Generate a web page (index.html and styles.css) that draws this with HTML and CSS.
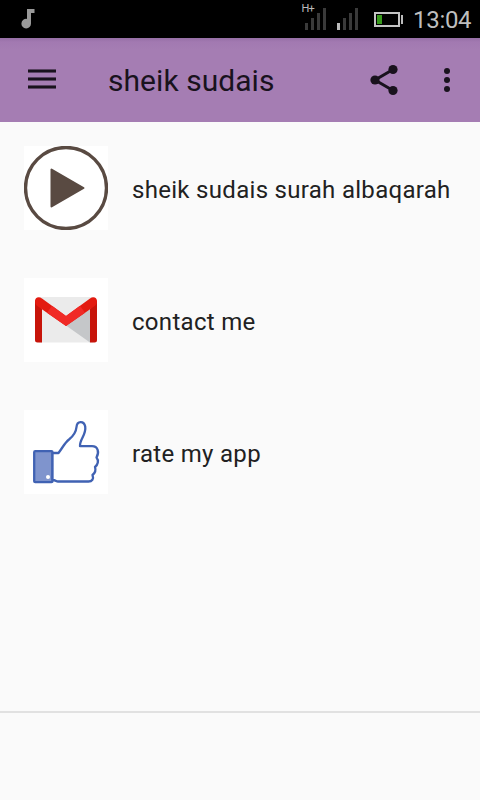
FILE: index.html
```html
<!DOCTYPE html>
<html lang="en">
<head>
<meta charset="utf-8">
<title>sheik sudais</title>
<link rel="stylesheet" href="styles.css">
</head>
<body>
<div class="status">
  <svg class="note" width="16" height="22" viewBox="0 0 16 22"><path fill="#999" d="M7 1h7.500v4H11v10.500a4.800 4.800 0 1 1-4-4.600z"/></svg>
  <svg class="signals" width="102" height="30" viewBox="0 0 102 30">
    <text class="network" x="-.5" y="9.500">H+</text>
    <path fill="#3a3a3a" d="M3 21h3v7H3zM9 16h3v12H9zM15 11h3v17h-3zM21 6h3v22h-3zM41 16h3v12h-3zM47 11h3v17h-3zM53 6h3v22h-3z"/>
    <path fill="#bbb" d="M35 21h3v7h-3zM99 13h2v9h-2z"/>
    <rect x="73" y="11" width="24" height="13" fill="none" stroke="#c4c4c4" stroke-width="2"/>
    <path fill="#379a1b" d="M75 13h5v9h-5z"/>
  </svg>
  <span class="clock">13:04</span>
</div>
<header class="bar">
  <svg class="menu" width="28" height="22" viewBox="0 0 28 22"><path d="M0 3h28M0 11h28M0 19h28" stroke="#19121d" stroke-opacity=".55" stroke-width="4"/><path d="M0 3h28M0 11h28M0 19h28" stroke="#19121d" stroke-width="2"/></svg>
  <h1 class="title">sheik sudais</h1>
  <svg class="share" width="28" height="32" viewBox="0 0 28 32"><path d="M23 5.500 5 16l18 10.500" fill="none" stroke="#19121d" stroke-width="3"/><g fill="#19121d"><circle cx="23" cy="5.500" r="4.600"/><circle cx="5" cy="16" r="4.600"/><circle cx="23" cy="26.500" r="4.600"/></g></svg>
  <svg class="more" width="6" height="24" viewBox="0 0 6 24"><g fill="#19121d"><circle cx="3" cy="3" r="3"/><circle cx="3" cy="12" r="3"/><circle cx="3" cy="21" r="3"/></g></svg>
</header>
<main class="list">
  <div class="row">
    <svg class="thumb" viewBox="0 0 84 84"><circle cx="42" cy="42" r="40.500" fill="none" stroke="#594a42" stroke-width="3.400"/><path d="M27.500 23.500v37L59.500 42z" fill="#594a42" stroke="#594a42" stroke-width="2" stroke-linejoin="round"/></svg>
    <span class="label">sheik sudais surah albaqarah</span>
  </div>
  <div class="row">
    <svg class="thumb" viewBox="0 0 84 84">
      <path fill="#ebebeb" d="M15 19h54v45.500H15z"/>
      <path fill="#c5c7c9" d="M42 47.500 66 30v34.500z"/>
      <path fill="#c7140a" d="M11 22 18 31v33.500h-4.500a2.500 2.500 0 0 1-2.500-2.500zM73 22l-7 9v33.500h4.500A2.500 2.500 0 0 0 73 62z"/>
      <path fill="#e31b10" d="M11 23c0-4 4-5 7-2.500l24 17.500 24-17.500c3-2.500 7-1.500 7 2.500 0 3-1 4-3 5.500L42 48 14 28.500c-2-1.500-3-2.500-3-5.500z"/>
      <path fill="#f02a26" d="M28 27.800 42 38l14-10.200 5 6.900L42 48 23 34.700z"/>
    </svg>
    <span class="label">contact me</span>
  </div>
  <div class="row">
    <svg class="thumb" viewBox="0 0 84 84">
      <g stroke="#4062b3" stroke-width="2.300" stroke-linejoin="round" stroke-linecap="round">
        <rect x="10.200" y="41.200" width="18.300" height="31" rx="1" fill="#7f94cd"/>
        <path fill="#fff" d="M28.500 43h6C39 37 41 32.500 45 29.500c5-4 7-7 7.500-12.500.5-6.500 7.500-6.500 8.700-.5C62.500 25 55.500 29 56 36.200h12c6 0 7.500 5.800 4.500 11.300 2.500 3 1.500 7-1.500 9.500 1 3 0 6-2.500 8 1.500 4-.5 6.500-4 6.500H34c-2 0-2-1.500-5.500-1.500z"/>
      </g>
      <circle cx="24" cy="67" r="2" fill="#fff"/>
    </svg>
    <span class="label">rate my app</span>
  </div>
</main>
<footer class="footer"></footer>
</body>
</html>
```
FILE: styles.css
```css
* { box-sizing: border-box; }
body {
  margin: 0;
  height: 800px;
  display: flex;
  flex-direction: column;
  overflow: hidden;
  background: #fafafa;
  color: #212121;
  font-family: Roboto, sans-serif;
}
svg { display: block; flex: none; }
.status {
  height: 38px;
  flex: none;
  display: flex;
  align-items: flex-start;
  padding-left: 20px;
  background: #000;
}
.note { margin-top: 8px; }
.signals { margin: 2px 0 0 266px; overflow: visible; }
.network { font-size: 11px; letter-spacing: -.8px; fill: #bbb; }
.clock {
  margin-left: 9px;
  color: #bebebe;
  font-size: 24px;
  letter-spacing: -.3px;
  line-height: 40px;
  white-space: nowrap;
}
.bar {
  height: 84px;
  flex: none;
  display: flex;
  align-items: center;
  padding-left: 28px;
  background: linear-gradient(#966fa6, #a279b1 4px, #a57db3 12px);
}
.menu { margin-top: -2px; }
.title {
  width: 262px;
  margin: 0 0 0 52px;
  padding-top: 2px;
  font-size: 30px;
  font-weight: 400;
  line-height: 36px;
  letter-spacing: .05px;
  color: #19121d;
}
.more { margin-left: 46px; }
.list {
  flex: 1;
  display: flex;
  flex-direction: column;
  gap: 48px;
  padding: 24px;
}
.row { display: flex; align-items: center; gap: 24px; }
.thumb { width: 84px; height: 84px; background: #fff; }
.label {
  padding-top: 4px;
  font-size: 24px;
  line-height: 32px;
  letter-spacing: .3px;
  white-space: nowrap;
}
.footer { height: 89px; flex: none; border-top: 2px solid #e1e1e1; }
```
